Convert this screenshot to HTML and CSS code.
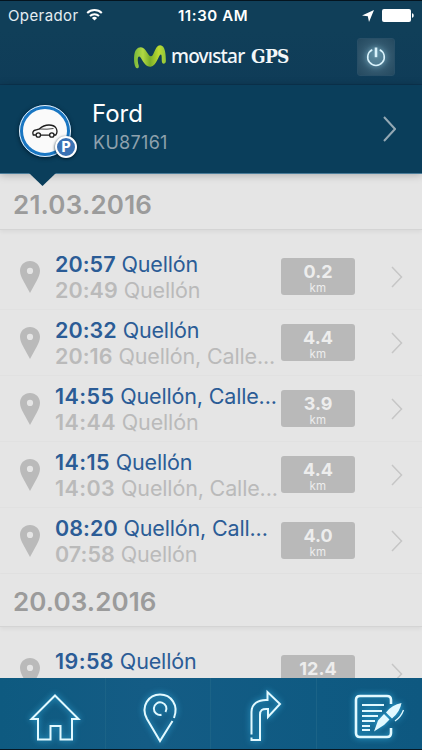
FILE: index.html
```html
<!DOCTYPE html>
<html lang="es">
<head>
<meta charset="utf-8">
<meta name="viewport" content="width=device-width">
<title>Movistar GPS</title>
<link rel="stylesheet" href="styles.css">
</head>
<body>
<svg class="defs" aria-hidden="true">
  <symbol id="pin" viewBox="0 0 20 32"><path fill="#bababa" fill-rule="evenodd" d="M10 0C4.300 0 0 4.300 0 9.800c0 3.500 1.500 6.500 3.300 10L10 32l6.700-12.200c1.800-3.500 3.300-6.500 3.300-10C20 4.300 15.700 0 10 0zm0 6.800a3.100 3.100 0 1 1 0 6.200 3.100 3.100 0 0 1 0-6.200z"/></symbol>
  <symbol id="chev" viewBox="0 0 12 22"><path d="M1 1l9.500 10L1 21" fill="none" stroke="currentColor" stroke-width="1.500"/></symbol>
</svg>
<div class="app">
  <div class="status">
    <div class="carrier"><span>Operador</span>
      <svg width="17" height="13" viewBox="0 0 17 13" fill="none" stroke="#fff" stroke-width="2"><path d="M1.200 5a10.500 10.500 0 0 1 14.600 0M4 8a6.500 6.500 0 0 1 9 0"/><path d="M8.500 12.500L5.900 9.900a3.800 3.800 0 0 1 5.200 0z" fill="#fff" stroke="none"/></svg>
    </div>
    <div class="clock">11:30 AM</div>
    <div class="power">
      <svg width="12" height="12" viewBox="0 0 12 12"><path d="M12 0L7 12 5.800 6.300 0 5.400z" fill="#fff"/></svg>
      <svg width="32" height="13" viewBox="0 0 32 13" fill="#fff"><rect width="29" height="13" rx="2"/><path d="M30 4.200c2.300.4 2.300 4.200 0 4.600z"/></svg>
    </div>
  </div>
  <header class="brand">
    <svg class="logo" width="34" height="26" viewBox="0 0 34 26"><defs><linearGradient id="m"><stop offset="0" stop-color="#79b83b"/><stop offset=".28" stop-color="#b1d843"/><stop offset=".5" stop-color="#79ae29"/><stop offset=".78" stop-color="#bddb32"/><stop offset="1" stop-color="#8fc53b"/></linearGradient></defs><path fill="url(#m)" d="M4.200 24.300C1.500 24 .6 17 1.200 11.500 1.800 6 4.500 3 8 3.200c5 .3 7 9 10 9.100C21 12.300 21.800 1.500 27 1.200c5.300-.2 5.800 9.300 5.900 15.800 0 3-3.700 3.700-4 .8-.3-3.400.1-7-1-7.200-2.200-.4-4 11.400-10.300 12.100C11 23.300 8.600 13 6.300 12.500c-2-.4-1.800 4.800-.7 8.500.6 2 0 3.500-1.400 3.300z"/></svg>
    <span class="movistar">movıstar</span><span class="gps">GPS</span>
    <button class="off" aria-label="Salir"><svg width="20" height="20" viewBox="0 0 20 20" fill="none" stroke="#d9f2fb"><path stroke-width="1.600" d="M6.300 2.700a8.300 8.300 0 1 0 7.400 0"/><path stroke-width="2.600" d="M10 .5v9.700"/></svg></button>
  </header>
  <section class="vehicle">
    <div class="avatar">
      <svg class="car" width="26" height="14" viewBox="0 0 26 14" fill="none" stroke="#1c1c1c" stroke-width="1.300"><path d="M3.900 11H1.300C.3 8.500 1 6.500 3.500 6L7.500 4.800C10.500 2 13 1 17 1c3.500 0 5.500.8 7 3 1.200 2.200 1.200 5-.2 7H22M8.500 11.200h9"/><path stroke-width=".8" d="M7.500 5q8 .6 14-.5"/><circle cx="6.300" cy="11" r="2.200"/><circle cx="19.800" cy="11" r="2.200"/></svg>
      <span class="park">P</span>
    </div>
    <div class="vtext"><div class="vname">Ford</div><div class="plate">KU87161</div></div>
    <svg class="vchev" viewBox="0 0 13 26"><path d="M1 1l11 12L1 25" fill="none" stroke="#94a8b4" stroke-width="2"/></svg>
    <div class="pointer"></div>
  </section>
  <main class="list">
    <h2 class="date first">21.03.2016</h2>
    <div class="trips">
      <article class="trip"><svg class="pin"><use href="#pin"/></svg><div class="txt"><div class="to"><b>20:57</b> Quellón</div><div class="from"><b>20:49</b> Quellón</div></div><div class="km"><b>0.2</b><span>km</span></div><svg class="chev"><use href="#chev"/></svg></article>
      <article class="trip"><svg class="pin"><use href="#pin"/></svg><div class="txt"><div class="to"><b>20:32</b> Quellón</div><div class="from"><b>20:16</b> Quellón, Calle...</div></div><div class="km"><b>4.4</b><span>km</span></div><svg class="chev"><use href="#chev"/></svg></article>
      <article class="trip"><svg class="pin"><use href="#pin"/></svg><div class="txt"><div class="to"><b class="wide">14:55</b> Quellón, Calle...</div><div class="from"><b class="wide">14:44</b> Quellón</div></div><div class="km"><b>3.9</b><span>km</span></div><svg class="chev"><use href="#chev"/></svg></article>
      <article class="trip"><svg class="pin"><use href="#pin"/></svg><div class="txt"><div class="to"><b class="wide">14:15</b> Quellón</div><div class="from"><b class="wide">14:03</b> Quellón, Calle...</div></div><div class="km"><b>4.4</b><span>km</span></div><svg class="chev"><use href="#chev"/></svg></article>
      <article class="trip"><svg class="pin"><use href="#pin"/></svg><div class="txt"><div class="to"><b>08:20</b> Quellón, Call...</div><div class="from"><b>07:58</b> Quellón</div></div><div class="km"><b>4.0</b><span>km</span></div><svg class="chev"><use href="#chev"/></svg></article>
    </div>
    <h2 class="date">20.03.2016</h2>
    <div class="trips">
      <article class="trip"><svg class="pin"><use href="#pin"/></svg><div class="txt"><div class="to"><b class="wide">19:58</b> Quellón</div><div class="from"><b class="wide">19:41</b> Quellón</div></div><div class="km"><b>12.4</b><span>km</span></div><svg class="chev"><use href="#chev"/></svg></article>
    </div>
  </main>
  <nav class="tabs">
    <a class="tab"><svg width="50" height="50" viewBox="0 0 50 50"><path d="M25 2.500L48.500 26H42v20.500H30.500V33h-10v13.500H8V26H1.500z"/></svg></a>
    <a class="tab"><svg width="34" height="50" viewBox="0 0 34 50"><path d="M29.500 28L17 48 4 26C-3 13 6 1.500 17 1.500S36 12 31 25M22.500 19a6.300 6.300 0 1 0-4 2.800"/></svg></a>
    <a class="tab"><svg width="32" height="50" viewBox="0 0 32 50"><path d="M2.500 43.500V21C2.500 13 9 8.500 18.500 9V1L31 13 19 26v-8c-6-.5-8 1-8 6v25H2.500v-2.500"/></svg></a>
    <a class="tab"><svg width="50" height="46" viewBox="0 0 50 46"><path class="sheet" d="M37 10V6q0-4-4-4H6Q2 2 2 6v33q0 4 4 4h27q4 0 4-4v-5"/><path d="M8 11h22M8 17h20M8 22h16M8 27h13M8 32h8M8 36h8"/><path class="fill" d="M20 37.500l4-11 6-6.500 5.500 5.500-5.500 5.500zM32 18.500q6-8 15.500-9.500Q46 18 38 24.500z"/><path class="thin" d="M41 27q6-4 8.500-11"/></svg></a>
  </nav>
</div>
</body>
</html>
```

FILE: styles.css
```css
* { box-sizing: border-box; }
body { margin: 0; font-family: Inter, "Liberation Sans", sans-serif; }
.defs { position: absolute; width: 0; height: 0; }
.app { width: 422px; height: 750px; overflow: hidden; display: flex; flex-direction: column; background: #e5e5e5; border-bottom: 1px solid #061722; }

.status { height: 30px; flex: none; border-top: 1px solid #04141f; background: #103f59; color: #fff; display: grid; grid-template-columns: 1fr auto 1fr; align-items: center; padding: 0 8px; font-size: 15px; line-height: 28px; }
.carrier { display: flex; align-items: center; gap: 7px; letter-spacing: .4px; color: #e4edf2; }
.carrier svg { margin-top: -2px; }
.clock { font-weight: 600; letter-spacing: .6px; padding-left: 4px; }
.power { display: flex; align-items: center; justify-content: flex-end; gap: 8px; }

.brand { height: 55px; flex: none; background: linear-gradient(#103f59, #0f3c58); border-bottom: 1px solid #0c3450; display: flex; align-items: center; padding-left: 133px; color: #f3f7f9; }
.logo { flex: none; }
.movistar { font: 500 19px/26px "Noto Sans", sans-serif; margin: -2px 0 0 4px; width: 76px; white-space: nowrap; letter-spacing: -.8px; }
.gps { font: bold 19px/26px "DejaVu Serif Condensed", "DejaVu Serif", serif; font-stretch: condensed; letter-spacing: -.7px; margin: -3px 0 0 4px; width: 106px; }
.off { flex: none; width: 38px; height: 38px; border: 1px solid #284f67; border-radius: 3px; padding: 0; display: grid; place-items: center; background: radial-gradient(circle, #52798c 0, #33596f 50%, #24495f 100%); }
.off svg { filter: drop-shadow(0 0 3px #8fd2ec); }

.vehicle { position: relative; z-index: 2; height: 89px; flex: none; background: #0a3e5b; border-bottom: 1px solid #4b7d9a; display: flex; align-items: center; padding: 0 26px 0 19px; box-shadow: 0 1px 8px rgba(0,0,0,.25); }
.avatar { position: relative; width: 52px; height: 52px; border-radius: 50%; border: 4px solid #1976c2; outline: 1.500px solid #e6eef3; outline-offset: -1px; background: #fafafa; display: grid; place-items: center; margin-top: 4px; box-shadow: 0 1px 4px #001c2d; }
.park { position: absolute; right: -10px; bottom: -5px; width: 22px; height: 22px; border-radius: 50%; border: 2px solid #fff; background: #3b72b4; color: #fff; font: 800 14px/18px Inter, sans-serif; text-align: center; box-shadow: 0 1px 3px #001c2d; }
.vtext { margin: -3px 0 0 21px; flex: 1; }
.vname { font-size: 24px; line-height: 30px; color: #fff; }
.plate { font-size: 18px; line-height: 27px; letter-spacing: .3px; color: #8ea1ad; padding-left: 1px; }
.vchev { width: 13px; height: 26px; }
.pointer { position: absolute; left: 29px; top: 88px; width: 27px; height: 13px; background: #0a3e5b; clip-path: polygon(0 0, 100% 0, 50% 100%); }

.list { flex: 1; min-height: 0; overflow: hidden; }
.date { margin: 0; height: 53px; padding: 0 13px; font-size: 26px; font-weight: 600; line-height: 56px; letter-spacing: .1px; color: #9b9b9b; border-bottom: 1px solid #d4d4d4; box-shadow: 0 2px 4px rgba(0,0,0,.05); }
.date.first { height: 56px; line-height: 62px; letter-spacing: .2px; }
.trips { padding-top: 14px; }
.trip { height: 66px; display: flex; align-items: center; padding: 0 19px 0 20px; border-bottom: 1px solid #e1e1e1; }
.pin { width: 20px; height: 32px; flex: none; }
.txt { margin-left: 15px; width: 226px; font-size: 21.500px; line-height: 26px; white-space: nowrap; letter-spacing: -.16px; margin-top: 1px; }
.txt b { font-weight: 600; letter-spacing: .05px; }
.txt .wide { letter-spacing: .4px; }
.to { color: #2b5c96; }
.from { color: #bababa; letter-spacing: -.15px; }
.km { width: 74px; height: 37px; border-radius: 3px; background: #b9b9b9; color: #ededed; display: flex; flex-direction: column; align-items: center; flex: none; }
.km b { font-size: 18px; line-height: 22px; margin-top: 3px; font-weight: 700; }
.km span { font-size: 11.500px; line-height: 11px; letter-spacing: .3px; }
.chev { width: 12px; height: 22px; margin-left: 36px; color: #c6c6c6; flex: none; }

.tabs { height: 71px; flex: none; display: grid; grid-template-columns: repeat(4, 1fr); background: linear-gradient(90deg, #0e5a80, #145c85 35%, #0f5a82 75%, #0e5880); }
.tab { display: grid; place-items: center; padding: 8px 0 0 5px; border-right: 1px solid #1b6387; }
.tab:nth-child(3) { padding: 4px 0 0 4px; }
.tab:last-child { border: 0; padding: 7px 0 0 19px; }
.tab svg { fill: none; stroke: #e2f9ff; stroke-width: 2; overflow: visible; filter: drop-shadow(0 0 3px #36b5e8); }
.tab .sheet { stroke-width: 2.600; }
.tab .thin { stroke-width: 1.300; }
.tab .fill { fill: #e2f9ff; stroke: none; }
```
